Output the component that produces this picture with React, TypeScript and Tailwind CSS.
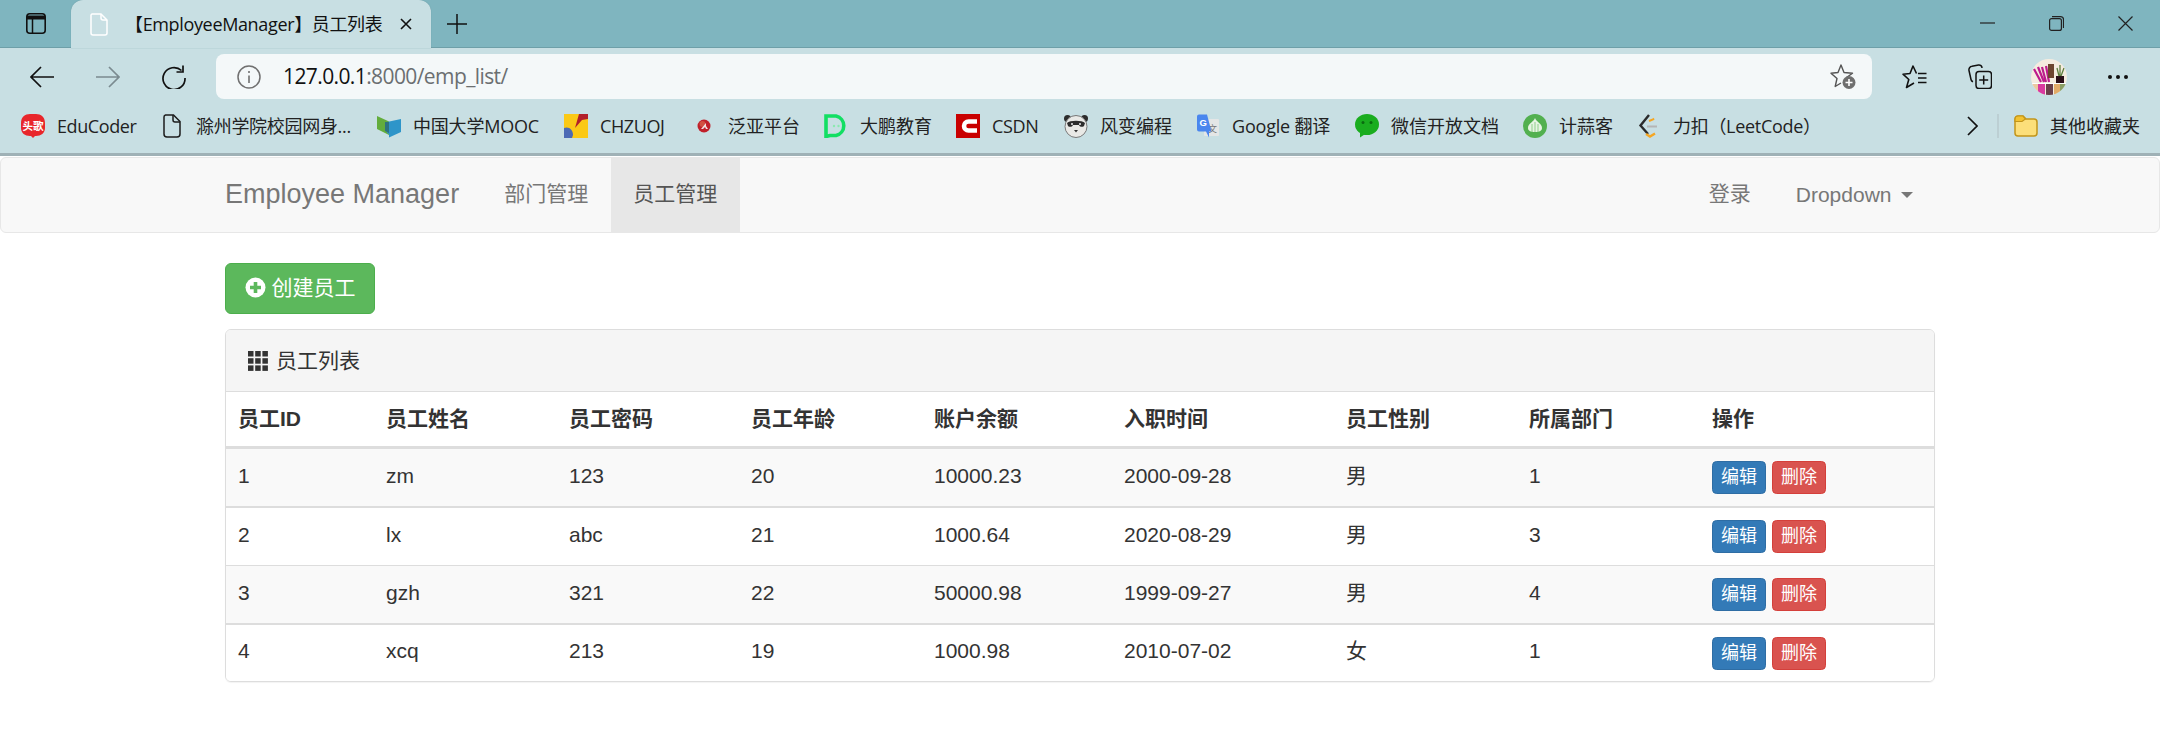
const cjk = "font-['Liberation_Sans','Noto_Sans_CJK_SC',sans-serif]";

type Emp = { id: number; name: string; pwd: string; age: number; bal: string; date: string; sex: string; dep: number };

const employees: Emp[] = [
  { id: 1, name: 'zm', pwd: '123', age: 20, bal: '10000.23', date: '2000-09-28', sex: '男', dep: 1 },
  { id: 2, name: 'lx', pwd: 'abc', age: 21, bal: '1000.64', date: '2020-08-29', sex: '男', dep: 3 },
  { id: 3, name: 'gzh', pwd: '321', age: 22, bal: '50000.98', date: '1999-09-27', sex: '男', dep: 4 },
  { id: 4, name: 'xcq', pwd: '213', age: 19, bal: '1000.98', date: '2010-07-02', sex: '女', dep: 1 },
];

// rows snap to whole pixels at this zoom, so the borders alternate 2px / 1px
const rowCells = ['h-[59px] border-b-2', 'h-[58px] border-b', 'h-[59px] border-b-2', 'h-[56px]'];

const headers = ['员工ID', '员工姓名', '员工密码', '员工年龄', '账户余额', '入职时间', '员工性别', '所属部门', '操作'];

function Ico({ children }: { children: React.ReactNode }) {
  return (
    <svg width={24} height={24} viewBox="0 0 24 24" fill="none" className="shrink-0">
      {children}
    </svg>
  );
}

const bookmarks: { label: string; w: string; icon: React.ReactNode }[] = [
  {
    label: 'EduCoder',
    w: 'w-[78px] tracking-[-0.4px]',
    icon: (
      <Ico>
        <path d="M9 0h6c5 0 9 3 9 9v5c0 5-4 8-9 8h-1l-2 2-2-2H9c-5 0-9-3-9-8V9c0-6 4-9 9-9z" fill="#e8262b" />
        <text x="1.500" y="16" fontSize="10.500" fontWeight="700" fill="#fff" fontFamily="Noto Sans CJK SC">头歌</text>
      </Ico>
    ),
  },
  {
    label: '滁州学院校园网身...',
    w: 'w-[156px] tracking-[-0.3px]',
    icon: (
      <Ico>
        <path d="M5.500 1h8l6.500 6.500V20a3 3 0 0 1-3 3H7a3 3 0 0 1-3-3V3a2 2 0 0 1 1.500-2z" stroke="#1c1c1c" strokeWidth="1.500" />
        <path d="M13 1v5a2 2 0 0 0 2 2h5" stroke="#1c1c1c" strokeWidth="1.500" />
      </Ico>
    ),
  },
  {
    label: '中国大学MOOC',
    w: 'w-[126px] tracking-[-0.2px]',
    icon: (
      <Ico>
        <path d="M0 2l12 5.500V21L0 15z" fill="#63ad3c" />
        <path d="M10 8l14-3v13l-12 5.500V20l-2-1z" fill="#2e95c9" />
        <path d="M8 8l4 0v11l-4-2z" fill="#2d7380" />
      </Ico>
    ),
  },
  {
    label: 'CHZUOJ',
    w: 'w-[67px] tracking-[-0.4px]',
    icon: (
      <Ico>
        <rect width="24" height="24" fill="#fbc916" />
        <path d="M24 0h-9l-4 14 7-8 6-1z" fill="#b21f2a" />
        <path d="M0 14c5-2 9 2 9 7l-1 3H0z" fill="#4c6ab5" />
      </Ico>
    ),
  },
  {
    label: '泛亚平台',
    w: 'w-[71px]',
    icon: (
      <Ico>
        <circle cx="12" cy="12" r="6.500" fill="#c0202a" />
        <circle cx="10.500" cy="10" r="3" fill="#e96" fillOpacity=".4" />
        <path d="M9 15l5-6v3l2 3h-2l-1-2-2 2z" fill="#f2e2e2" />
      </Ico>
    ),
  },
  {
    label: '大鹏教育',
    w: 'w-[71px]',
    icon: (
      <Ico>
        <path d="M2 2h10a10 10 0 0 1 0 19.500H6l-4 1z" stroke="#12df63" strokeWidth="3.600" />
        <circle cx="10" cy="12" r="1.200" fill="#8be9b0" />
        <circle cx="14.500" cy="12" r="1.200" fill="#8be9b0" />
      </Ico>
    ),
  },
  {
    label: 'CSDN',
    w: 'w-[47px] tracking-[-0.3px]',
    icon: (
      <Ico>
        <rect width="24" height="24" fill="#c90000" />
        <path d="M21 7.500h-8.500a4.500 4.500 0 0 0 0 9H21" stroke="#fff" strokeWidth="4.500" />
      </Ico>
    ),
  },
  {
    label: '风变编程',
    w: 'w-[71px]',
    icon: (
      <Ico>
        <circle cx="3.500" cy="4.500" r="3.500" fill="#2c2c2c" />
        <circle cx="20.500" cy="4.500" r="3.500" fill="#2c2c2c" />
        <circle cx="12" cy="12.500" r="11" fill="#e9e9e6" stroke="#777" strokeWidth="1" />
        <path d="M3 9c3-3 15-3 18 0l-1 3c-2 2-5 0-5-1H9c0 1-3 3-5 1z" fill="#2c2c2c" />
        <circle cx="8" cy="10" r="1" fill="#eee" />
        <circle cx="16" cy="10" r="1" fill="#eee" />
        <path d="M10 16h4l-2 2.500z" fill="#333" />
      </Ico>
    ),
  },
  {
    label: 'Google 翻译',
    w: 'w-[98px] tracking-[-0.2px]',
    icon: (
      <Ico>
        <rect x="8" y="5" width="15" height="17" rx="1" fill="#e4e6e6" />
        <text x="12" y="18" fontSize="9" fill="#777" fontFamily="Noto Sans CJK SC">文</text>
        <path d="M1 2.500A2 2 0 0 1 3 .500h8l4.500 17H13l0 6-3-6H3a2 2 0 0 1-2-2z" fill="#4a86ee" />
        <text x="3.500" y="12" fontSize="9.500" fontWeight="700" fill="#fff" fontFamily="Liberation Sans">G</text>
      </Ico>
    ),
  },
  {
    label: '微信开放文档',
    w: 'w-[107px]',
    icon: (
      <Ico>
        <ellipse cx="12" cy="10.500" rx="12" ry="10.500" fill="#1aad1f" />
        <path d="M5 17l0 6.500 6-4z" fill="#1aad1f" />
        <circle cx="8" cy="8.500" r="1.500" fill="#0a6b10" />
        <circle cx="16" cy="8.500" r="1.500" fill="#0a6b10" />
      </Ico>
    ),
  },
  {
    label: '计蒜客',
    w: 'w-[53px]',
    icon: (
      <Ico>
        <circle cx="12" cy="12" r="12" fill="#52b04f" />
        <path d="M12 4c1 4 7 5 7 10 0 3-3 4-7 4s-7-1-7-4c0-5 6-6 7-10z" fill="#e7f4e3" />
        <path d="M9 10v8M12 8v10M15 10v8" stroke="#8fcf8a" strokeWidth="1" />
      </Ico>
    ),
  },
  {
    label: '力扣（LeetCode）',
    w: 'w-[135px] tracking-[-0.3px]',
    icon: (
      <Ico>
        <path d="M12 1L3.500 11.500 11 20" stroke="#2b2b2b" strokeWidth="2.400" />
        <path d="M9 20l4 2.500 5-3" stroke="#f5a623" strokeWidth="2.400" />
        <path d="M12 7l4-1.500 1-1" stroke="#f5a623" strokeWidth="2" />
        <path d="M10 12.500h10" stroke="#b5b5b5" strokeWidth="2" />
      </Ico>
    ),
  },
];

function BrowserChrome() {
  return (
    <div className="font-['Open_Sans','Noto_Sans_CJK_SC',sans-serif] text-[#1c1c1c]">
      {/* Title bar */}
      <div className="h-[48px] bg-[#7fb5bf] border-b border-[#6e9fa8] flex">
        <svg width="20" height="21" viewBox="0 0 20 21" fill="none" className="ml-[26px] mt-[13px]">
          <rect x="0.800" y="0.800" width="18.400" height="19.400" rx="3" stroke="#111" strokeWidth="1.600" />
          <path d="M1 4.500h18" stroke="#111" strokeWidth="4" />
          <path d="M6.500 5v15" stroke="#111" strokeWidth="1.500" />
        </svg>
        <div className="ml-[25px] w-[360px] h-[48px] bg-[#c8dfe3] rounded-t-[12px] flex items-center shadow-[0_0_1px_#5f8f98]">
          <svg width="18" height="23" viewBox="0 0 18 23" fill="none" className="ml-[19px] shrink-0">
            <path d="M2 1h9l6 6v13a2 2 0 0 1-2 2H3a2 2 0 0 1-2-2V2z" stroke="#fff" strokeWidth="1.500" />
            <path d="M11 1v4a2 2 0 0 0 2 2h4" stroke="#fff" strokeWidth="1.500" />
          </svg>
          <span className="ml-[17px] text-[18px] leading-none whitespace-nowrap w-[261px] tracking-[-0.35px] text-[#111]">【EmployeeManager】员工列表</span>
          <svg width="12" height="12" viewBox="0 0 12 12" className="ml-[14px] shrink-0">
            <path d="M1 1l10 10M11 1L1 11" stroke="#111" strokeWidth="1.600" />
          </svg>
        </div>
        <svg width="20" height="20" viewBox="0 0 20 20" className="ml-[16px] mt-[14px]">
          <path d="M10 0v20M0 10h20" stroke="#111" strokeWidth="1.500" />
        </svg>
        <div className="ml-auto h-full flex items-center pr-[27px] gap-[54px] pb-[1px]">
          <svg width="15" height="2" viewBox="0 0 15 2"><path d="M0 1h15" stroke="#222" strokeWidth="1.200" /></svg>
          <svg width="15" height="15" viewBox="0 0 15 15" fill="none">
            <rect x="0.600" y="2.600" width="11.800" height="11.800" rx="2" stroke="#222" strokeWidth="1.200" />
            <path d="M3 0.600h8.500a3 3 0 0 1 3 3V12" stroke="#222" strokeWidth="1.200" />
          </svg>
          <svg width="15" height="15" viewBox="0 0 15 15"><path d="M0.500 0.500l14 14M14.500 0.500l-14 14" stroke="#222" strokeWidth="1.200" /></svg>
        </div>
      </div>

      {/* Toolbar */}
      <div className="h-[57px] bg-[#c8dfe3] flex items-center">
        <svg width="24" height="22" viewBox="0 0 24 22" fill="none" className="ml-[30px]">
          <path d="M24 11H1.500M11 1L1 11l10 10" stroke="#111" strokeWidth="1.700" />
        </svg>
        <svg width="24" height="22" viewBox="0 0 24 22" fill="none" className="ml-[42px]">
          <path d="M0 11h22.500M13 1l10 10-10 10" stroke="#7b8b90" strokeWidth="1.700" />
        </svg>
        <svg width="24" height="24" viewBox="0 0 24 24" fill="none" className="ml-[42px]">
          <path d="M19.500 5.500A11 11 0 1 0 23 13" stroke="#111" strokeWidth="1.700" />
          <path d="M21 0.500V7h-6.500" stroke="#111" strokeWidth="1.700" />
        </svg>
        <div className="ml-[30px] w-[1656px] h-[45px] bg-[#f4f8f9] rounded-[8px] flex items-center pl-[21px] pr-[16px]">
          <svg width="24" height="24" viewBox="0 0 24 24" fill="none" className="shrink-0">
            <circle cx="12" cy="12" r="11" stroke="#707070" strokeWidth="1.500" />
            <path d="M12 10.500V18M12 6v2" stroke="#707070" strokeWidth="1.600" />
          </svg>
          <span className="ml-[22px] text-[21px] leading-none text-[#111] tracking-[-0.6px]">
            127.0.0.1<span className="text-[#6b6f71]">:8000/emp_list/</span>
          </span>
          <svg width="26" height="25" viewBox="0 0 26 25" fill="none" className="ml-auto">
            <path d="M16.500 13.500L22.500 9.200 14 8.500 11 1 8 8.500 1 9.200l6 5.300-1.800 8 5.800-3.500" stroke="#555" strokeWidth="1.400" strokeLinejoin="round" />
            <circle cx="19" cy="18.500" r="6.500" fill="#6f6f6f" />
            <path d="M19 15v7M15.500 18.500h7" stroke="#fff" strokeWidth="1.600" />
          </svg>
        </div>
        <svg width="25" height="24" viewBox="0 0 25 24" fill="none" className="ml-[30px]">
          <path d="M14.500 8.500L11 1 8 8.500 1 9.200l5.800 5.300-2.300 8L12 18" stroke="#111" strokeWidth="1.600" strokeLinejoin="round" />
          <path d="M16 8.500h8.500M16 13h8.500M16 17.500h8.500" stroke="#111" strokeWidth="1.600" />
        </svg>
        <svg width="24" height="25" viewBox="0 0 24 25" fill="none" className="ml-[41px]">
          <path d="M14 4a3 3 0 0 0-3.500-3L4 2.300A3.500 3.500 0 0 0 1 6.500L3 15.500a3 3 0 0 0 2 2.300" stroke="#111" strokeWidth="1.500" />
          <rect x="8" y="7.500" width="15.500" height="17" rx="3" stroke="#111" strokeWidth="1.500" />
          <path d="M15.700 11.500v9M11.200 16h9" stroke="#111" strokeWidth="1.500" />
        </svg>
        <svg width="36" height="36" viewBox="0 0 36 36" className="ml-[39px] rounded-full">
          <rect width="36" height="36" fill="#f5ece0" />
          <path d="M3 10l7 13M7 8l6 15M11 8l4 15M15 7l3 16" stroke="#bd1c8c" strokeWidth="2.200" />
          <rect x="17" y="5" width="6" height="14" fill="#6e4630" />
          <rect x="25" y="17" width="8" height="7" fill="#2a0f18" />
          <path d="M29 6v11M26 9l2 8M33 9l-3 8" stroke="#5d7f3f" strokeWidth="1.300" />
          <rect y="24" width="36" height="1.500" fill="#fff" />
          <rect x="0" y="25" width="7" height="11" fill="#ecc9a0" />
          <rect x="7" y="25" width="7" height="11" fill="#d93aa0" />
          <rect x="15" y="25" width="7" height="11" fill="#6b3f4a" />
          <rect x="23" y="25" width="6" height="11" fill="#e2ab68" />
          <rect x="29" y="25" width="7" height="11" fill="#8b9f66" />
        </svg>
        <div className="ml-[41px] flex gap-[4px]">
          <div className="w-[4px] h-[4px] rounded-full bg-[#111]" />
          <div className="w-[4px] h-[4px] rounded-full bg-[#111]" />
          <div className="w-[4px] h-[4px] rounded-full bg-[#111]" />
        </div>
      </div>

      {/* Bookmarks */}
      <div className="h-[51px] bg-[#c8dfe3] border-b-[3px] border-[#9fb1b6] flex items-center pl-[21px] pb-[6px] text-[18px] leading-none text-[#222]">
        {bookmarks.map((b) => (
          <div key={b.label} className="flex items-center gap-[12px] mr-[25px]">
            {b.icon}
            <span className={`whitespace-nowrap ${b.w}`}>{b.label}</span>
          </div>
        ))}
        <svg width="11" height="20" viewBox="0 0 11 20" fill="none" className="ml-[134px]">
          <path d="M1 1l9 9-9 9" stroke="#111" strokeWidth="1.700" />
        </svg>
        <div className="ml-[19px] w-[2px] h-[24px] bg-[#bccfd3]" />
        <svg width="24" height="22" viewBox="0 0 24 22" className="ml-[15px]">
          <path d="M1 4a3 3 0 0 1 3-3h5l3 3h8a3 3 0 0 1 3 3v11a3 3 0 0 1-3 3H4a3 3 0 0 1-3-3z" fill="#fcdf7a" stroke="#c2951a" strokeWidth="1.500" />
          <path d="M1 6.500h7l3.500-2.500L9 1H4a3 3 0 0 0-3 3z" fill="#f3c230" stroke="#c2951a" strokeWidth="1.200" />
        </svg>
        <span className="ml-[12px] whitespace-nowrap">其他收藏夹</span>
      </div>
    </div>
  );
}

function Navbar() {
  return (
    <div className="mt-[1px] h-[76px] bg-[#f8f8f8] border border-[#e7e7e7] rounded-[6px]">
      <div className="w-[1710px] mx-auto flex h-full leading-[72px]">
        <a className="text-[27px] text-[#777] mr-[22.500px]">Employee Manager</a>
        <a className="px-[22.500px] text-[21px] text-[#777]">部门管理</a>
        <a className="px-[22.500px] text-[21px] text-[#555] bg-[#e7e7e7]">员工管理</a>
        <a className="ml-auto text-[21px] text-[#777]">登录</a>
        <a className="ml-[45px] mr-[22.500px] text-[21px] text-[#777] flex items-center gap-[9px]">
          Dropdown
          <span className="w-0 h-0 border-x-[6px] border-x-transparent border-t-[6px] border-t-[#777]" />
        </a>
      </div>
    </div>
  );
}

function EmpTable() {
  return (
    <div className="mt-[15px] border border-[#ddd] rounded-[6px] overflow-hidden shadow-[0_1px_1px_rgba(0,0,0,0.05)]">
      <div className="h-[62px] bg-[#f5f5f5] border-b border-[#ddd] flex items-center pl-[22px] text-[21px] text-[#333]">
        <svg width="20" height="20" viewBox="0 0 20 20" fill="#333" className="mr-[8px]">
          <rect width="5.500" height="5.500" />
          <rect x="7.200" width="5.500" height="5.500" />
          <rect x="14.400" width="5.500" height="5.500" />
          <rect y="7.200" width="5.500" height="5.500" />
          <rect x="7.200" y="7.200" width="5.500" height="5.500" />
          <rect x="14.400" y="7.200" width="5.500" height="5.500" />
          <rect y="14.400" width="5.500" height="5.500" />
          <rect x="7.200" y="14.400" width="5.500" height="5.500" />
          <rect x="14.400" y="14.400" width="5.500" height="5.500" />
        </svg>
        员工列表
      </div>
      <table className="w-full table-fixed border-separate border-spacing-0 text-[21px] text-[#333]">
        <colgroup>
          <col className="w-[148px]" />
          <col className="w-[183px]" />
          <col className="w-[182px]" />
          <col className="w-[183px]" />
          <col className="w-[190px]" />
          <col className="w-[222px]" />
          <col className="w-[183px]" />
          <col className="w-[183px]" />
          <col />
        </colgroup>
        <thead>
          <tr>
            {headers.map((h) => (
              <th key={h} className="h-[57px] border-b-[3px] border-[#ddd] px-[12px] text-left font-bold">{h}</th>
            ))}
          </tr>
        </thead>
        <tbody>
          {employees.map((e, i) => {
            const base = `${rowCells[i]} border-[#ddd] px-[12px] ${i % 2 === 0 ? 'bg-[#f9f9f9]' : 'bg-white'}`;
            const td = `${base} pb-[4px]`;
            return (
              <tr key={e.id}>
                <td className={td}>{e.id}</td>
                <td className={td}>{e.name}</td>
                <td className={td}>{e.pwd}</td>
                <td className={td}>{e.age}</td>
                <td className={td}>{e.bal}</td>
                <td className={td}>{e.date}</td>
                <td className={td}>{e.sex}</td>
                <td className={td}>{e.dep}</td>
                <td className={base}>
                  <div className="flex gap-[6px]">
                    <a className="w-[54px] h-[33px] flex items-center justify-center bg-[#337ab7] border border-[#2e6da4] rounded-[4.500px] text-[18px] text-white">编辑</a>
                    <a className="w-[54px] h-[33px] flex items-center justify-center bg-[#d9534f] border border-[#d43f3a] rounded-[4.500px] text-[18px] text-white">删除</a>
                  </div>
                </td>
              </tr>
            );
          })}
        </tbody>
      </table>
    </div>
  );
}

export default function App() {
  return (
    <div className="w-[2160px] h-[746px] bg-white overflow-hidden">
      <BrowserChrome />
      <div className={cjk}>
        <Navbar />
        <div className="w-[1710px] mx-auto mt-[30px]">
          <a className="w-[150px] h-[51px] pb-[2px] flex items-center justify-center gap-[6px] bg-[#5cb85c] border border-[#4cae4c] rounded-[6px] text-[21px] text-white">
            <svg width="21" height="21" viewBox="0 0 21 21">
              <circle cx="10.500" cy="10.500" r="10" fill="#fff" />
              <path d="M10.500 5v11M5 10.500h11" stroke="#5cb85c" strokeWidth="3.600" />
            </svg>
            创建员工
          </a>
          <EmpTable />
        </div>
      </div>
    </div>
  );
}
